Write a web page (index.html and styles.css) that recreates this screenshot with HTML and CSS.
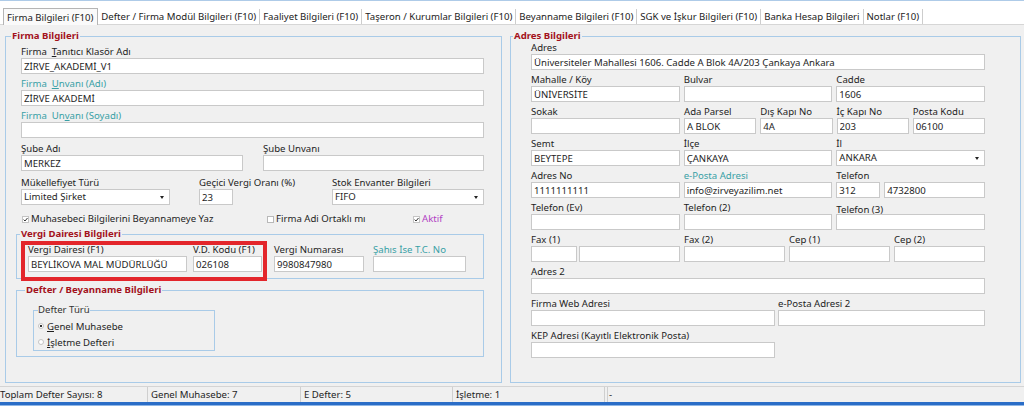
FILE: index.html
```html
<!DOCTYPE html>
<html lang="tr">
<head>
    <meta charset="UTF-8">
    <title>Firma Bilgileri</title>
    <link rel="stylesheet" href="styles.css">
</head>
<body>
<div class="window">
    <div class="tabs">
        <div class="tab active">Firma Bilgileri (F10)</div>
        <div class="tab">Defter / Firma Modül Bilgileri (F10)</div>
        <div class="tab">Faaliyet Bilgileri (F10)</div>
        <div class="tab">Taşeron / Kurumlar Bilgileri (F10)</div>
        <div class="tab">Beyanname Bilgileri (F10)</div>
        <div class="tab">SGK ve İşkur Bilgileri (F10)</div>
        <div class="tab">Banka Hesap Bilgileri</div>
        <div class="tab">Notlar (F10)</div>
    </div>

    <div class="page">
        <!-- left: firma -->
        <fieldset class="group firma">
            <legend>Firma Bilgileri</legend>

            <div class="field row-a">
                <label>Firma&nbsp; <u>T</u>anıtıcı Klasör Adı</label>
                <input class="inp" value="ZİRVE_AKADEMİ_V1">
            </div>
            <div class="field row-b">
                <label class="teal">Firma&nbsp; <u>U</u>nvanı (Adı)</label>
                <input class="inp" value="ZİRVE AKADEMİ">
            </div>
            <div class="field row-b">
                <label class="teal">Firma&nbsp; Un<u>v</u>anı (Soyadı)</label>
                <input class="inp" value="">
            </div>

            <div class="row sube">
                <div class="field">
                    <label>Şube Adı</label>
                    <input class="inp" value="MERKEZ">
                </div>
                <div class="field">
                    <label>Şube Unvanı</label>
                    <input class="inp" value="">
                </div>
            </div>

            <div class="row mukellef">
                <div class="field">
                    <label>Mükellefiyet Türü</label>
                    <div class="combo w149"><span>Limited Şirket</span><span class="arrow"></span></div>
                </div>
                <div class="field">
                    <label>Geçici Vergi Oranı (%)</label>
                    <input class="inp w34" value="23">
                </div>
                <div class="field">
                    <label>Stok Envanter Bilgileri</label>
                    <div class="combo"><span>FIFO</span><span class="arrow"></span></div>
                </div>
            </div>

            <div class="row checks">
                <div class="check">
                    <svg width="7" height="7" viewBox="0 0 7 7"><rect x="0.5" y="0.5" width="6" height="6" fill="#fff" stroke="#c4c4c4"/><path d="M1.6 3.6 L3 5 L5.5 2" fill="none" stroke="#333" stroke-width="1"/></svg>
                    <span>Muhasebeci Bilgilerini Beyannameye Yaz</span>
                </div>
                <div class="check">
                    <svg width="7" height="7" viewBox="0 0 7 7"><rect x="0.5" y="0.5" width="6" height="6" fill="#fff" stroke="#b8b8b8"/></svg>
                    <span>Firma Adi Ortaklı mı</span>
                </div>
                <div class="check">
                    <svg width="7" height="7" viewBox="0 0 7 7"><rect x="0.5" y="0.5" width="6" height="6" fill="#fff" stroke="#c4c4c4"/><path d="M1.6 3.6 L3 5 L5.5 2" fill="none" stroke="#333" stroke-width="1"/></svg>
                    <span class="purple">Aktif</span>
                </div>
            </div>

            <fieldset class="group sub vergi">
                <legend>Vergi Dairesi Bilgileri</legend>
                <div class="vd-row">
                    <div class="field vd-name">
                        <label>Vergi Dairesi (F1)</label>
                        <input class="inp" value="BEYLİKOVA MAL MÜDÜRLÜĞÜ">
                    </div>
                    <div class="field vd-code">
                        <label>V.D. Kodu (F1)</label>
                        <input class="inp" value="026108">
                    </div>
                    <div class="field vd-no">
                        <label>Vergi Numarası</label>
                        <input class="inp" value="9980847980">
                    </div>
                    <div class="field vd-tc">
                        <label class="teal">Şahıs İse T.C. No</label>
                        <input class="inp" value="">
                    </div>
                    <div class="highlight"></div>
                </div>
            </fieldset>

            <fieldset class="group sub defter">
                <legend>Defter / Beyanname Bilgileri</legend>
                <fieldset class="inner">
                    <legend>Defter Türü</legend>
                    <div class="radio"><span class="dot on"></span><span><u>G</u>enel Muhasebe</span></div>
                    <div class="radio"><span class="dot"></span><span><u>İ</u>şletme Defteri</span></div>
                </fieldset>
            </fieldset>
        </fieldset>

        <!-- right: adres -->
        <fieldset class="group adres">
            <legend>Adres Bilgileri</legend>

            <div class="field">
                <label>Adres</label>
                <input class="inp" value="Üniversiteler Mahallesi 1606. Cadde A Blok 4A/203 Çankaya Ankara">
            </div>

            <div class="row cols3">
                <div class="field"><label>Mahalle / Köy</label><input class="inp" value="ÜNİVERSİTE"></div>
                <div class="field"><label>Bulvar</label><input class="inp" value=""></div>
                <div class="field"><label>Cadde</label><input class="inp" value="1606"></div>
            </div>

            <div class="row cols5">
                <div class="field"><label>Sokak</label><input class="inp" value=""></div>
                <div class="field"><label>Ada Parsel</label><input class="inp" value="A BLOK"></div>
                <div class="field"><label>Dış Kapı No</label><input class="inp" value="4A"></div>
                <div class="field"><label>İç Kapı No</label><input class="inp" value="203"></div>
                <div class="field"><label>Posta Kodu</label><input class="inp" value="06100"></div>
            </div>

            <div class="row cols3">
                <div class="field"><label>Semt</label><input class="inp" value="BEYTEPE"></div>
                <div class="field"><label>İlçe</label><input class="inp" value="ÇANKAYA"></div>
                <div class="field"><label>İl</label><div class="combo"><span>ANKARA</span><span class="arrow"></span></div></div>
            </div>

            <div class="row cols3">
                <div class="field"><label>Adres No</label><input class="inp" value="1111111111"></div>
                <div class="field"><label class="teal">e-Posta Adresi</label><input class="inp" value="info@zirveyazilim.net"></div>
                <div class="field">
                    <label>Telefon</label>
                    <div class="pair tel"><input class="inp" value="312"><input class="inp" value="4732800"></div>
                </div>
            </div>

            <div class="row cols3">
                <div class="field"><label>Telefon (Ev)</label><input class="inp" value=""></div>
                <div class="field"><label>Telefon (2)</label><input class="inp" value=""></div>
                <div class="field"><label class="low">Telefon (3)</label><input class="inp" value=""></div>
            </div>

            <div class="row fax">
                <div class="field">
                    <label>Fax (1)</label>
                    <div class="pair faxpair"><input class="inp" value=""><input class="inp" value=""></div>
                </div>
                <div class="field"><label>Fax (2)</label><input class="inp" value=""></div>
                <div class="field"><label>Cep (1)</label><input class="inp" value=""></div>
                <div class="field"><label>Cep (2)</label><input class="inp" value=""></div>
            </div>

            <div class="row">
                <div class="field"><label>Adres 2</label><input class="inp" value=""></div>
            </div>

            <div class="row web">
                <div class="field"><label>Firma Web Adresi</label><input class="inp" value=""></div>
                <div class="field"><label>e-Posta Adresi 2</label><input class="inp" value=""></div>
            </div>

            <div class="row web">
                <div class="field"><label>KEP Adresi (Kayıtlı Elektronik Posta)</label><input class="inp" value=""></div>
            </div>
        </fieldset>
    </div>

    <div class="statusbar">
        <div class="panel p1">Toplam Defter Sayısı: 8</div>
        <div class="panel p2">Genel Muhasebe: 7</div>
        <div class="panel p3">E Defter: 5</div>
        <div class="panel p4">İşletme: 1</div>
        <div class="panel last">-</div>
    </div>
    <div class="bottom-bar"></div>
</div>
</body>
</html>
```

FILE: styles.css
```css
* {
    box-sizing: border-box;
    margin: 0;
    padding: 0;
}

body {
    font-family: "Noto Sans", sans-serif;
    font-size: 9.6px;
    color: #1e1e1e;
    background: #fff;
    width: 1024px;
    height: 406px;
    overflow: hidden;
}

.window {
    display: flex;
    flex-direction: column;
    height: 406px;
    border-top: 1px solid #aecbe8;
}

/* tabs */
.tabs {
    height: 24px;
    display: flex;
    align-items: flex-end;
    padding-left: 3px;
    background: #fff;
    border-bottom: 1px solid #d6d6d6;
}

.tab {
    height: 15px;
    line-height: 15px;
    padding: 0 3px;
    border-right: 1px solid #cdcdcd;
    white-space: nowrap;
    color: #222;
}

.tab.active {
    height: 17px;
    line-height: 17px;
    border: 1px solid #b5b5b5;
    border-bottom: none;
    background: #fafafa;
    margin-bottom: -1px;
    padding: 0 4px 0 3px;
}

/* page */
.page {
    flex: 1;
    display: flex;
    gap: 8px;
    padding: 5px 0 0 5px;
    background: #f0f0f0;
}

.group {
    border: 1px solid #a9cbe8;
    min-width: 0;
}

.group > legend {
    line-height: 12px;
    padding: 0 1px;
    font-weight: bold;
    color: #a3121c;
}

.firma {
    width: 497px;
    height: 353px;
    padding: 0 17px 0 15px;
}

.firma > legend {
    margin-left: -10px;
}

.adres {
    width: 511px;
    height: 353px;
    padding: 0 35px 0 20px;
}

.adres > legend {
    margin-left: -18px;
}

/* fields */
.field {
    display: flex;
    flex-direction: column;
    min-width: 0;
}

.field label {
    display: block;
    height: 12px;
    line-height: 12px;
    white-space: nowrap;
}

.teal {
    color: #38a0a6;
}

.purple {
    color: #b23fc4;
}

.low {
    position: relative;
    top: 2px;
}

.inp {
    display: block;
    width: 100%;
    height: 16px;
    border: 1px solid #c9c9c9;
    background: #fff;
    padding: 0 2px;
    font: inherit;
    color: #1e1e1e;
    outline: none;
}

.combo {
    height: 16px;
    border: 1px solid #c9c9c9;
    background: #fff;
    padding: 0 2px;
    display: flex;
    align-items: center;
    justify-content: space-between;
    line-height: 14px;
}

.arrow {
    width: 0;
    height: 0;
    margin-right: 3px;
    border-left: 2.5px solid transparent;
    border-right: 2.5px solid transparent;
    border-top: 3px solid #222;
}

.w149 { width: 149px; }
.w34 { width: 34px; }

.pair {
    display: flex;
    gap: 3px;
}

/* left group rows */
.row-a { margin-top: 4px; }
.row-b { margin-top: 4px; }

.row {
    display: grid;
    margin-top: 4px;
}

.sube {
    grid-template-columns: 222px 1fr;
    column-gap: 20px;
    margin-top: 5px;
}

.mukellef {
    grid-template-columns: 178px 133px 1fr;
    margin-top: 6px;
}

.checks {
    grid-template-columns: 245px 146px 1fr;
    margin-top: 8px;
    line-height: 12px;
}

.check {
    display: flex;
    align-items: center;
    gap: 2px;
    white-space: nowrap;
}

.check svg {
    margin-left: 1px;
}

.sub {
    margin: 3px 0 0 -5px;
    width: 468px;
}

.vergi {
    padding: 4px 0 6px 11px;
}

.vergi > legend,
.defter > legend {
    margin-left: -8px;
}

.vd-row {
    display: flex;
    position: relative;
}

.vd-name { width: 159px; }
.vd-code { width: 69px; margin-left: 6px; }
.vd-no { width: 90px; margin-left: 12px; }
.vd-tc { width: 93px; margin-left: 9px; }

/* red highlight drawn over the tax office fields */
.highlight {
    position: absolute;
    left: -7px;
    top: -3px;
    width: 246px;
    height: 40px;
    border: 4px solid #e3262b;
}

.defter {
    margin-top: 5px;
    padding: 8px 0 5px 16px;
}

.inner {
    width: 182px;
    border: 1px solid #a9cbe8;
    padding: 2px 0 0 4px;
}

.inner > legend {
    line-height: 12px;
    padding: 0;
    margin-left: 0;
    color: #333;
}

.radio {
    display: flex;
    align-items: center;
    height: 16px;
    gap: 3px;
}

.dot {
    width: 6px;
    height: 6px;
    border: 1px solid #c4c4c4;
    border-radius: 50%;
    background: #fff;
}

.dot.on {
    background: radial-gradient(circle, #333 0 1.2px, #fff 1.5px);
}

/* right group rows */
.cols3 {
    grid-template-columns: 1fr 1fr 1fr;
    column-gap: 4px;
}

.cols5 {
    grid-template-columns: 149px 1fr 1fr 1fr 1fr;
    column-gap: 4px;
}

.tel {
    display: grid;
    grid-template-columns: 44px 1fr;
    gap: 4px;
}

.fax {
    grid-template-columns: 149px 101px 101px 1fr;
    column-gap: 4px;
}

.faxpair {
    display: grid;
    grid-template-columns: 46px 1fr;
    gap: 2px;
}

.web {
    grid-template-columns: 244px 1fr;
    column-gap: 3px;
}

/* status bar */
.statusbar {
    height: 16px;
    display: flex;
    background: #f0f0f0;
    border-top: 1px solid #d4d4d4;
    line-height: 15px;
}

.panel {
    border-right: 1px solid #cfcfcf;
    margin-right: 2px;
    padding-left: 1px;
    white-space: nowrap;
}

.p1 { width: 148px; padding-left: 0; }
.p2 { width: 151px; }
.p3 { width: 150px; }
.p4 { width: 150px; }

.panel.last {
    flex: 1;
    border-right: none;
    border-left: 1px solid #cfcfcf;
}

.bottom-bar {
    height: 4px;
    background: #2a6dc7;
    border-bottom: 1px solid #8fb6e6;
}
```
